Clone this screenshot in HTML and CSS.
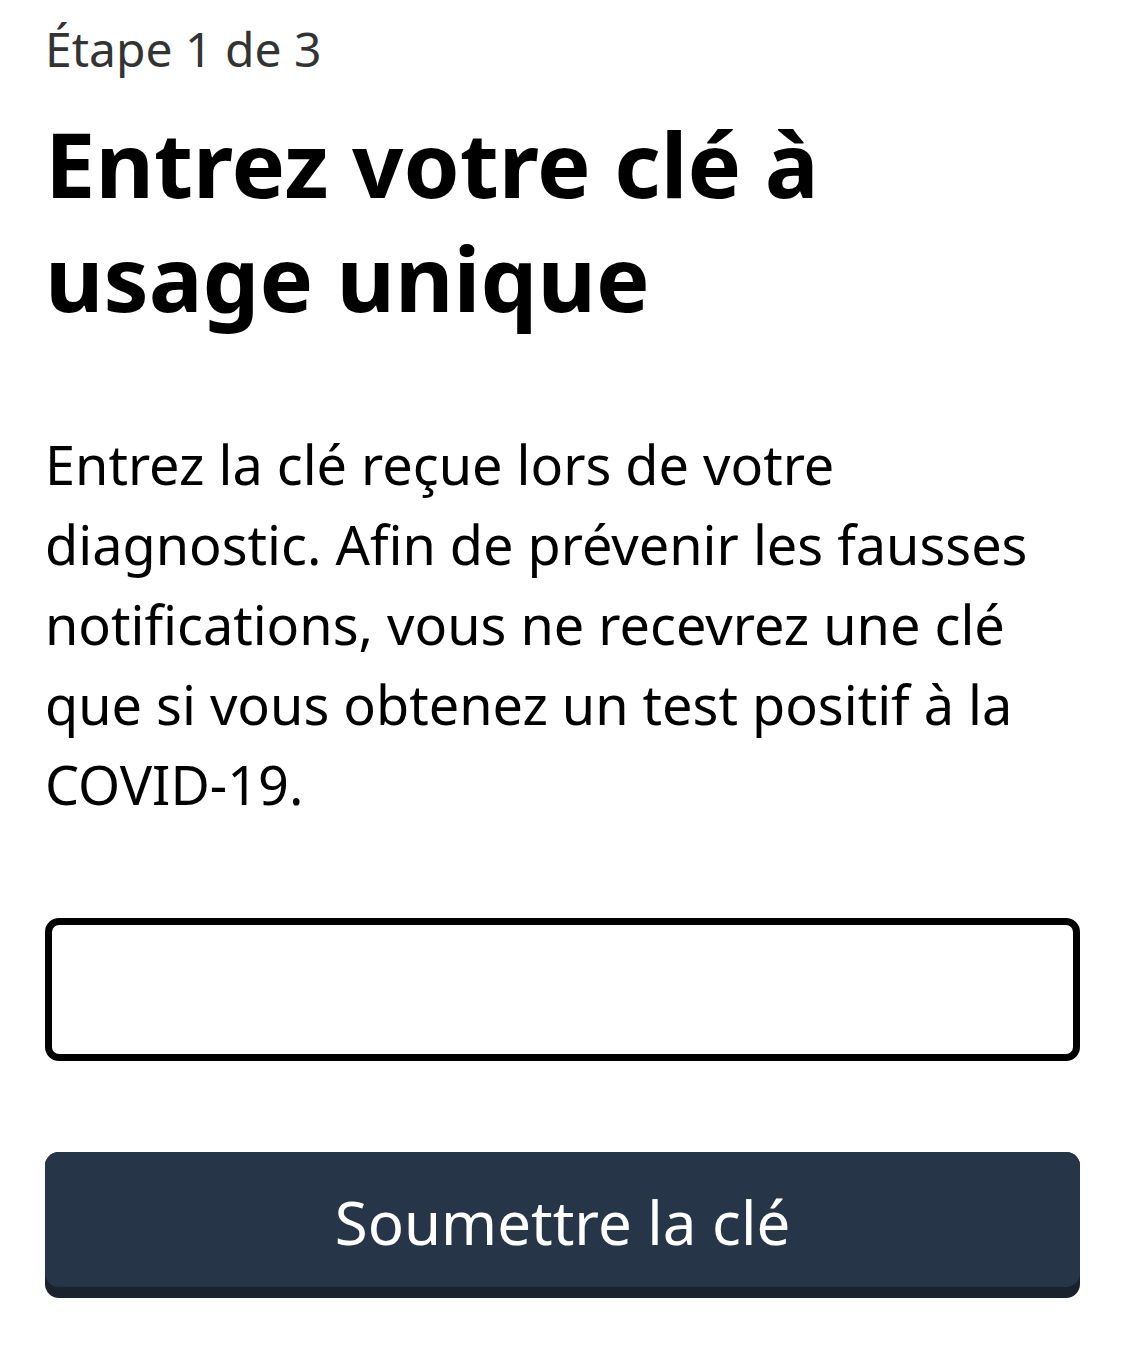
FILE: index.html
```html
<!DOCTYPE html>
<html lang="fr">
<head>
<meta charset="utf-8">
<link rel="stylesheet" href="styles.css">
</head>
<body>
<main class="page">
  <p class="step">Étape 1 de 3</p>
  <h1 class="title">Entrez votre clé à usage unique</h1>
  <p class="lead">Entrez la clé reçue lors de votre diagnostic. Afin de prévenir les fausses notifications, vous ne recevrez une clé que si vous obtenez un test positif à la COVID-19.</p>
  <input class="key-input" type="text" aria-label="Clé à usage unique">
  <div class="submit-wrap">
    <button class="submit" type="button">Soumettre la clé</button>
  </div>
</main>
</body>
</html>
```

FILE: styles.css
```css
html, body {
  margin: 0;
  padding: 0;
  background: #ffffff;
}
body {
  font-family: "Noto Sans", "Open Sans", sans-serif;
  color: #000;
}
.page {
  width: 1035px;
  padding: 18px 45px 40px 45px;
  display: flex;
  flex-direction: column;
}
.step {
  margin: 0;
  font-size: 48px;
  line-height: 61px;
  color: #333333;
}
.title {
  margin: 27px 0 0 0;
  font-size: 90px;
  line-height: 114px;
  font-weight: 700;
  width: 820px;
}
.lead {
  margin: 90px 0 0 0;
  font-size: 54px;
  line-height: 80px;
  color: #000;
}
.key-input {
  margin: 94px 0 0 0;
  box-sizing: border-box;
  width: 1035px;
  height: 143px;
  border: 7px solid #000;
  border-radius: 14px;
  background: #fff;
  outline: none;
  font-family: inherit;
  font-size: 54px;
  padding: 0 24px;
}
.submit-wrap {
  margin: 91px 0 0 0;
  width: 1035px;
  padding-bottom: 11px;
  border-radius: 14px;
  background: #1a232d;
}
.submit {
  display: block;
  box-sizing: border-box;
  width: 100%;
  height: 135px;
  border: none;
  border-radius: 14px;
  background: #263648;
  color: #ffffff;
  font-family: inherit;
  font-size: 60px;
  padding: 5px 0 0 0;
  margin: 0;
}
```
